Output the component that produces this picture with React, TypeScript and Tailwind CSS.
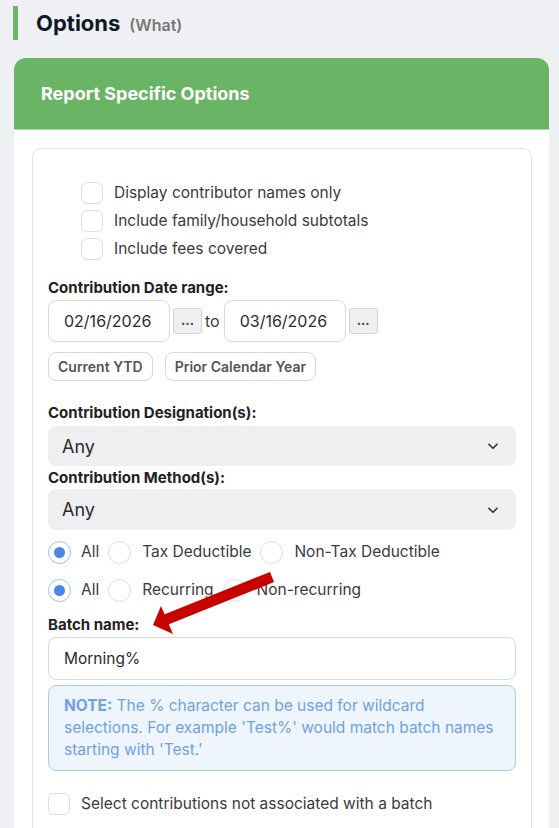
import React from "react";

function Checkbox() {
  return <span className="block w-[22px] h-[22px] shrink-0 rounded-[6px] border border-[#dcdee5] bg-white" />;
}

function Radio({ checked }: { checked?: boolean }) {
  return (
    <span
      className={
        "flex items-center justify-center w-[23px] h-[23px] shrink-0 rounded-full border bg-white " +
        (checked ? "border-[#9fc0ef]" : "border-[#dcdee5]")
      }
    >
      {checked && <span className="block w-[11px] h-[11px] rounded-full bg-[#4a86e8]" />}
    </span>
  );
}

function RadioRow({ items, className }: { items: string[]; className?: string }) {
  return (
    <div className={"flex items-center h-[24px] " + (className ?? "")}>
      {items.map((label, i) => (
        <div key={label} className={"flex items-center " + (i > 0 ? "ml-[9px]" : "")}>
          <Radio checked={i === 0} />
          <span className={i === 0 ? "ml-[10px]" : "ml-[11px]"}>{label}</span>
        </div>
      ))}
    </div>
  );
}

function Chevron() {
  return (
    <svg width="14" height="14" viewBox="0 0 24 24" fill="none" stroke="#2a2a2a" strokeWidth="2.6" strokeLinecap="round" strokeLinejoin="round">
      <path d="M5 9l7 7 7-7" />
    </svg>
  );
}

function Select() {
  return (
    <div className="flex items-center justify-between rounded-lg bg-[#efeff1] pl-[14px] pr-[16px] text-[18px] text-[#2b2b2b]">
      <span>Any</span>
      <Chevron />
    </div>
  );
}

function DateInput({ value }: { value: string }) {
  return (
    <div className="flex items-center w-[122px] h-[42px] rounded-lg border border-[#d9dae0] bg-white pl-[15px] text-[16px] text-[#2b2b2b]">
      {value}
    </div>
  );
}

function DotsButton() {
  return (
    <div className="flex items-center justify-center w-[29px] h-[26px] rounded-[3px] border border-[#d3d4d8] bg-[#efeff1] text-[13px] font-bold leading-none text-[#444] pb-[2px]">
      ...
    </div>
  );
}

const label = "text-[15px] font-bold leading-[20px] text-[#222]";

export default function App() {
  return (
    <div
      className="relative min-h-[828px] w-full overflow-hidden bg-[#eff0f3] text-[#3a3a40]"
      style={{ fontFamily: "Inter, 'Noto Sans', sans-serif" }}
    >
      {/* section title */}
      <div className="flex items-center pt-[6px] pl-[13px]">
        <span className="block w-[5px] h-[34px] bg-[#6ab565]" />
        <h2 className="ml-[18px] text-[22px] font-bold leading-none text-[#111827]">Options</h2>
        <span className="ml-[9px] mt-[3px] text-[16px] font-semibold text-[#777]">(What)</span>
      </div>

      <div className="ml-[14px] mr-[10px] mt-[18px] rounded-t-[12px] bg-white">
        <div className="flex items-center h-[72px] rounded-t-[12px] bg-[#6ab565] border-b border-[#b5dab2] pl-[27px]">
          <span className="text-[18px] font-bold text-white">Report Specific Options</span>
        </div>

        <div className="px-[18px] pt-[18px] pr-[17px]">
          <div className="rounded-t-[9px] border border-b-0 border-[#e1e1e8] px-[15px] pt-[30px] pb-[40px] text-[15.5px]">
            {/* display options */}
            <div className="pl-[33px]">
              {["Display contributor names only", "Include family/household subtotals", "Include fees covered"].map((t) => (
                <div key={t} className="flex items-center h-[28px]">
                  <Checkbox />
                  <span className="ml-[11px]">{t}</span>
                </div>
              ))}
            </div>

            <div className={"mt-[15px] " + label}>Contribution Date range:</div>
            <div className="mt-[2px] flex items-center">
              <DateInput value="02/16/2026" />
              <span className="ml-[3px]"><DotsButton /></span>
              <span className="ml-[3px] mr-[4px] text-[16px]">to</span>
              <DateInput value="03/16/2026" />
              <span className="ml-[3px]"><DotsButton /></span>
            </div>

            <div className="mt-[10px] flex items-center gap-[12px]">
              <div className="flex items-center h-[29px] rounded-lg border border-[#d8d9de] px-[9px] text-[14px] font-semibold text-[#555]">Current YTD</div>
              <div className="flex items-center h-[29px] rounded-lg border border-[#d8d9de] px-[9px] text-[14px] font-semibold text-[#555]">Prior Calendar Year</div>
            </div>

            <div className={"mt-[22px] " + label}>Contribution Designation(s):</div>
            <div className="mt-[3px] h-[40px] flex flex-col justify-center rounded-lg bg-[#efeff1]">
              <Select />
            </div>
            <div className={"mt-[2px] " + label}>Contribution Method(s):</div>
            <div className="mt-[1px] h-[41px] flex flex-col justify-center rounded-lg bg-[#efeff1]">
              <Select />
            </div>

            <RadioRow className="mt-[10px]" items={["All", "Tax Deductible", "Non-Tax Deductible"]} />
            <RadioRow className="mt-[14px]" items={["All", "Recurring", "Non-recurring"]} />

            <div className={"mt-[13px] " + label}>Batch name:</div>
            <div className="mt-[2px] flex items-center h-[43px] rounded-lg border border-[#d9dae0] bg-white pl-[15px] text-[#2b2b2b]">
              Morning%
            </div>

            <p className="mt-[5px] rounded-lg border border-[#a9cbf2] bg-[#eef5fd] px-[15px] py-[9px] leading-[22px] text-[#6fa2e2]">
              <b className="font-bold">NOTE:</b> The % character can be used for wildcard selections. For example 'Test%' would match batch names starting with 'Test.'
            </p>

            <div className="mt-[21px] flex items-center">
              <Checkbox />
              <span className="ml-[11px]">Select contributions not associated with a batch</span>
            </div>
          </div>
        </div>
      </div>

      {/* callout arrow */}
      <svg className="pointer-events-none absolute left-0 top-0" width="559" height="828" viewBox="0 0 559 828">
        <line x1="272" y1="577" x2="165" y2="620" stroke="#c80000" strokeWidth="11" />
        <polygon points="153,625 161,606 173,634" fill="#c80000" />
      </svg>
    </div>
  );
}
